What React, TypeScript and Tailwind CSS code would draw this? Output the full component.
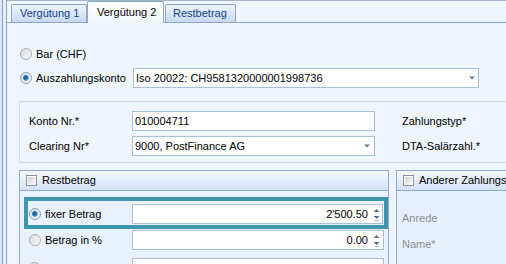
import React from "react";

function Radio({ checked }: { checked?: boolean }) {
  return (
    <svg width="12" height="12" viewBox="0 0 12 12" className="shrink-0">
      <defs>
        <linearGradient id="rfill" x1="0" y1="0" x2="1" y2="1">
          <stop offset="0" stopColor="#d6d9dd" />
          <stop offset="1" stopColor="#fbfbfc" />
        </linearGradient>
        <radialGradient id="rdot" cx="0.4" cy="0.4" r="0.6">
          <stop offset="0" stopColor="#1b4f86" />
          <stop offset="0.6" stopColor="#2f78b5" />
          <stop offset="1" stopColor="#86c0ea" />
        </radialGradient>
      </defs>
      <circle cx="6" cy="6" r="5.5" fill="url(#rfill)" stroke={checked ? "#8ea1b5" : "#a9afb7"} />
      {checked && <circle cx="6" cy="6" r="3" fill="url(#rdot)" />}
    </svg>
  );
}

function Checkbox() {
  return (
    <svg width="11" height="11" viewBox="0 0 11 11" className="shrink-0">
      <defs>
        <linearGradient id="cfill" x1="0" y1="0" x2="1" y2="1">
          <stop offset="0" stopColor="#d2d4d7" />
          <stop offset="1" stopColor="#f7f7f7" />
        </linearGradient>
      </defs>
      <rect x="0.5" y="0.5" width="10" height="10" fill="#fdfdfd" stroke="#8e9194" />
      <rect x="2" y="2" width="7" height="7" fill="url(#cfill)" />
    </svg>
  );
}

function DropArrow() {
  return (
    <svg width="6" height="4" viewBox="0 0 6 4" className="shrink-0">
      <path d="M0 0.5h6L3 3.5z" fill="#5a77a0" />
    </svg>
  );
}

function Spin() {
  return (
    <svg width="7" height="13" viewBox="0 0 7 13" className="shrink-0">
      <path d="M0.5 4L3.5 1l3 3z" fill="#5a6f8c" />
      <path d="M0.5 8l3 3 3-3z" fill="#5a6f8c" />
      <path d="M1.5 12.5h4" stroke="#9fb0c7" strokeWidth="1" />
    </svg>
  );
}

function Field({ children, w }: { children?: React.ReactNode; w: string }) {
  return (
    <div className={`flex h-[20px] shrink-0 items-center border border-[#a9bfdc] bg-white pl-[2px] text-black ${w}`}>
      {children}
    </div>
  );
}

function GroupHeader({ title }: { title: string }) {
  return (
    <div className="flex h-[20px] shrink-0 items-center gap-[5px] overflow-hidden border-b border-[#8eadd6] bg-gradient-to-b from-[#f6faff] to-[#d2e2f7] pl-[6px]">
      <Checkbox />
      <span className="whitespace-nowrap">{title}</span>
    </div>
  );
}

export default function App() {
  return (
    <div className="flex h-[264px] w-[506px] overflow-hidden bg-[#eff5fd] font-['Liberation_Sans',Arial,sans-serif] text-[11px] leading-none text-black">
      <div className="w-[2px] shrink-0 bg-[#dce6f4]" />
      <div className="w-px shrink-0 bg-[#8ba3c8]" />
      <div className="w-[3px] shrink-0 bg-[#e6eef9]" />
      <div className="w-px shrink-0 bg-[#8ba3c8]" />

      <div className="flex min-w-0 flex-1 flex-col">
        {/* tabs */}
        <div className="flex h-[23px] shrink-0 items-end border-b border-t border-b-[#8ea6c9] border-t-[#a6b5cb] pl-[4px]">
          <div className="flex h-[18px] w-[76px] items-center rounded-t-[2px] border border-b-0 border-[#8ea6c9] bg-gradient-to-b from-[#eef4fc] to-[#c7d9f2] pl-[8px] text-[#15428b]">
            Vergütung 1
          </div>
          <div className="-mb-px flex h-[22px] w-[77px] items-center rounded-t-[2px] border border-b-0 border-[#8ea6c9] bg-gradient-to-b from-white to-[#eff5fd] pl-[9px]">
            Vergütung 2
          </div>
          <div className="ml-px flex h-[18px] w-[71px] items-center rounded-t-[2px] border border-b-0 border-[#8ea6c9] bg-gradient-to-b from-[#eef4fc] to-[#c7d9f2] pl-[7px] text-[#15428b]">
            Restbetrag
          </div>
        </div>

        {/* payment type */}
        <div className="mt-[21px] flex h-[20px] shrink-0 items-center gap-[4px] pl-[13px]">
          <Radio />
          <span>Bar (CHF)</span>
        </div>
        <div className="mt-[4px] flex h-[20px] shrink-0 items-center pl-[13px]">
          <div className="flex w-[113px] items-center gap-[4px]">
            <Radio checked />
            <span>Auszahlungskonto</span>
          </div>
          <Field w="w-[346px]">
            <span className="flex-1">Iso 20022: CH9581320000001998736</span>
            <span className="mr-[3px]">
              <DropArrow />
            </span>
          </Field>
        </div>

        {/* account group */}
        <div className="ml-[12px] mt-[13px] flex shrink-0 flex-col gap-[5px] border-b border-l border-t border-[#d3dbe6] pb-[6px] pl-[9px] pt-[9px]">
          <div className="flex h-[20px] items-center">
            <span className="w-[103px]">Konto Nr.*</span>
            <Field w="w-[243px]">010004711</Field>
            <span className="ml-[27px] whitespace-nowrap">Zahlungstyp*</span>
          </div>
          <div className="flex h-[20px] items-center">
            <span className="w-[103px]">Clearing Nr*</span>
            <Field w="w-[243px]">
              <span className="flex-1">9000, PostFinance AG</span>
              <span className="mr-[4px]">
                <DropArrow />
              </span>
            </Field>
            <span className="ml-[27px] whitespace-nowrap">DTA-Salärzahl.*</span>
          </div>
        </div>

        {/* lower groups */}
        <div className="ml-[12px] mt-[7px] flex shrink-0 gap-[7px]">
          <div className="flex w-[370px] shrink-0 flex-col border border-b-0 border-[#8eadd6]">
            <GroupHeader title="Restbetrag" />
            <div className="flex flex-col bg-[#e9f1fc] pb-[20px] pl-[4px] pt-[6px]">
              <div className="h-[32px] w-[364px] border-[4px] border-[#3f95ac] pt-[3px]">
                <div className="flex items-center">
                  <div className="ml-px flex w-[103px] items-center gap-[4px]">
                    <Radio checked />
                    <span>fixer Betrag</span>
                  </div>
                  <Field w="w-[251px]">
                    <span className="flex-1 text-right">2'500.50</span>
                    <span className="ml-[5px] mr-[2px]">
                      <Spin />
                    </span>
                  </Field>
                </div>
              </div>
              <div className="mt-px flex items-center pl-[5px]">
                <div className="flex w-[103px] items-center gap-[4px]">
                  <Radio />
                  <span>Betrag in %</span>
                </div>
                <Field w="w-[252px]">
                  <span className="flex-1 text-right">0.00</span>
                  <span className="ml-[5px] mr-[3px]">
                    <Spin />
                  </span>
                </Field>
              </div>
              <div className="mt-[8px] flex items-start pl-[5px]">
                <div className="flex w-[103px] items-center gap-[4px] pt-[4px]">
                  <Radio />
                </div>
                <Field w="w-[252px]" />
              </div>
            </div>
          </div>

          <div className="flex min-w-0 flex-1 flex-col border border-b-0 border-r-0 border-[#8eadd6]">
            <GroupHeader title="Anderer Zahlungsempfänger" />
            <div className="flex flex-1 flex-col bg-[#e6effb] pl-[5px] pt-[17px] text-[#8c8f93]">
              <div className="flex h-[20px] items-center">Anrede</div>
              <div className="mt-[6px] flex h-[20px] items-center">Name*</div>
            </div>
          </div>
        </div>
      </div>
    </div>
  );
}
